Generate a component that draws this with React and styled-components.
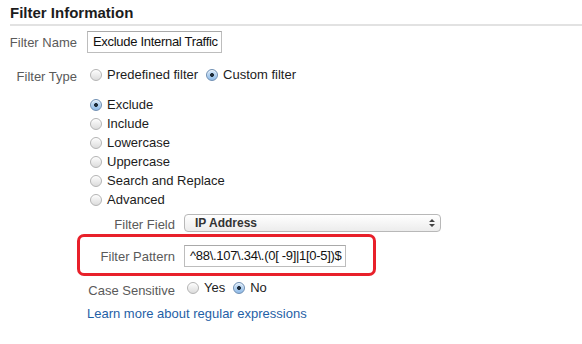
import React from "react";
import styled, { createGlobalStyle } from "styled-components";

const Global = createGlobalStyle`
  html, body { margin: 0; padding: 0; background: #fff; }
  body { font-family: "Liberation Sans", Arial, Helvetica, sans-serif; font-size: 13px; color: #222; }
`;

const Page = styled.div`
  width: 582px;
  height: 344px;
  overflow: hidden;
  padding-top: 4px;
  box-sizing: border-box;
`;

const Title = styled.h2`
  margin: 0 0 0 10px;
  font-size: 15px;
  font-weight: bold;
  color: #1c1c1c;
  line-height: 18px;
  padding-bottom: 2px;
  border-bottom: 2px solid #e2e2e2;
`;

const Row = styled.div`
  display: grid;
  grid-template-columns: ${(p) => p.$label}px 1fr;
  column-gap: ${(p) => p.$gap}px;
  align-items: center;
  justify-items: start;
  margin-top: ${(p) => p.$top || 0}px;
  padding-left: ${(p) => p.$indent || 0}px;
  position: relative;
`;

const Label = styled.div`
  justify-self: end;
  text-align: right;
  color: #5a5a5a;
  font-size: 13px;
  white-space: nowrap;
  position: relative;
  top: ${(p) => p.$shift || 0}px;
`;

const TextInput = styled.div`
  height: 22px;
  box-sizing: border-box;
  border: 1px solid #bdbdbd;
  border-top-color: #a9a9a9;
  padding: 0 3px 0 5px;
  line-height: 20px;
  font-size: 13px;
  color: #111;
  white-space: nowrap;
  letter-spacing: ${(p) => p.$ls || 0}px;
`;

const Choices = styled.div`
  display: flex;
  align-items: center;
  gap: 5px;
  position: relative;
  top: ${(p) => p.$shift || 0}px;
`;

const Option = styled.label`
  display: flex;
  align-items: center;
  gap: 5px;
  height: 19px;
  color: #1c1c1c;
  font-size: 13px;
  white-space: nowrap;
`;

const Radio = styled.span`
  width: 12px;
  height: 12px;
  box-sizing: border-box;
  border-radius: 50%;
  margin-left: 3px;
  flex: none;
  border: 1px solid ${(p) => (p.$on ? "#6f8fb3" : "#b4b4b4")};
  background: ${(p) =>
    p.$on
      ? "radial-gradient(circle at 50% 50%, #1e2c3a 0 1.8px, transparent 2.2px), linear-gradient(#d4e6f8, #8fbbe8)"
      : "linear-gradient(#fdfdfd, #dcdcdc)"};
  box-shadow: inset 0 1px 1px rgba(255,255,255,0.7);
`;

const List = styled.div`
  display: flex;
  flex-direction: column;
  margin-left: 87px;
  margin-top: 11px;
`;

const Select = styled.div`
  width: 257px;
  height: 18px;
  box-sizing: border-box;
  border: 1px solid #b8b8b8;
  border-radius: 4px;
  background: linear-gradient(#ffffff, #ececec);
  display: flex;
  align-items: center;
  justify-content: space-between;
  padding: 0 5px 0 10px;
  font-size: 12px;
  font-weight: bold;
  color: #333;
`;

const Arrows = styled.svg`
  width: 6px;
  height: 10px;
`;

const Highlight = styled.div`
  position: absolute;
  left: 77px;
  top: -11px;
  width: 299px;
  height: 42px;
  box-sizing: border-box;
  border: 3px solid #e8202a;
  border-radius: 7px;
  pointer-events: none;
`;

const Link = styled.a`
  display: block;
  margin: 8px 0 0 87px;
  color: #1f5fa6;
  text-decoration: none;
  font-size: 13px;
`;

const R = ({ on, children }) => (
  <Option>
    <Radio $on={on} />
    {children}
  </Option>
);

export default function App() {
  return (
    <>
      <Global />
      <Page>
        <Title>Filter Information</Title>
        <Row $label={77} $gap={10} $top={5}>
          <Label>Filter Name</Label>
          <TextInput $ls={-0.3}>Exclude Internal Traffic</TextInput>
        </Row>
        <Row $label={77} $gap={10} $top={12}>
          <Label $shift={2}>Filter Type</Label>
          <Choices>
            <R>Predefined filter</R>
            <R on>Custom filter</R>
          </Choices>
        </Row>
        <List>
          <R on>Exclude</R>
          <R>Include</R>
          <R>Lowercase</R>
          <R>Uppercase</R>
          <R>Search and Replace</R>
          <R>Advanced</R>
        </List>
        <Row $label={88} $gap={9} $indent={87} $top={5}>
          <Label $shift={1}>Filter Field</Label>
          <Select>
            IP Address
            <Arrows viewBox="0 0 6 10">
              <path d="M0 4 L3 1 L6 4 Z M0 6 L3 9 L6 6 Z" fill="#444" />
            </Arrows>
          </Select>
        </Row>
        <Row $label={88} $gap={9} $indent={87} $top={13}>
          <Highlight />
          <Label>Filter Pattern</Label>
          <TextInput $ls={-0.3}>^88\.107\.34\.(0[ -9]|1[0-5])$</TextInput>
        </Row>
        <Row $label={88} $gap={9} $indent={87} $top={12}>
          <Label $shift={2}>Case Sensitive</Label>
          <Choices $shift={-1}>
            <R>Yes</R>
            <R on>No</R>
          </Choices>
        </Row>
        <Link href="#">Learn more about regular expressions</Link>
      </Page>
    </>
  );
}
